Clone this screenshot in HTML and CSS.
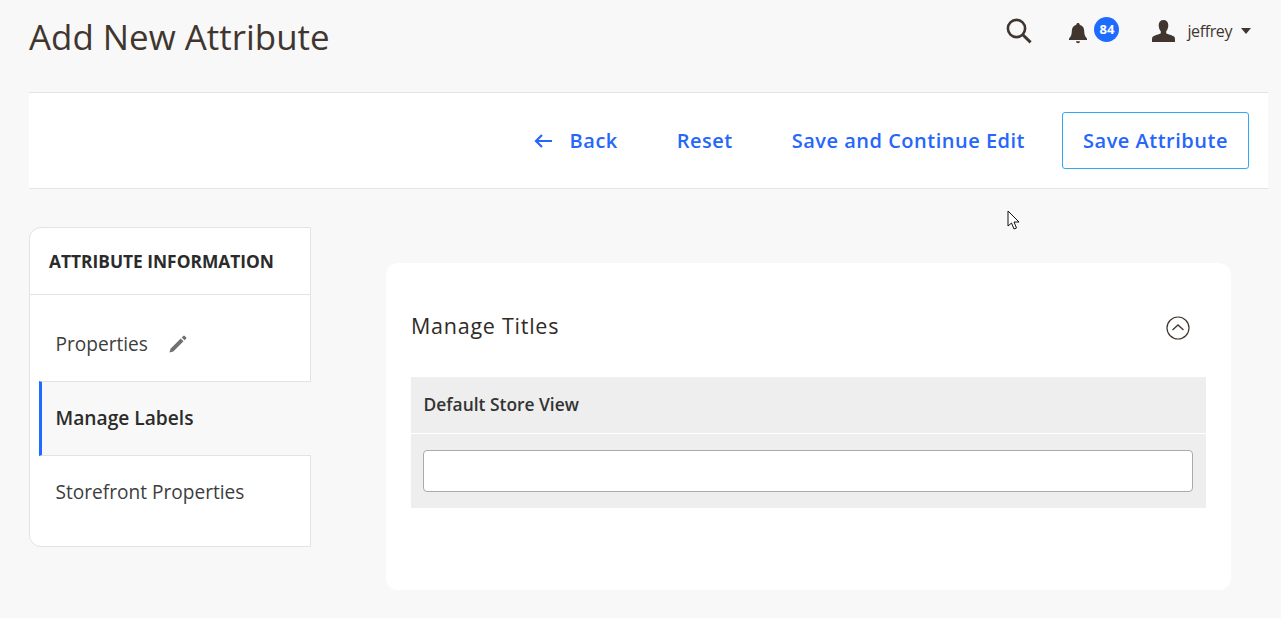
FILE: index.html
```html
<!DOCTYPE html>
<html lang="en">
<head>
<meta charset="utf-8">
<title>Add New Attribute</title>
<link rel="stylesheet" href="styles.css">
</head>
<body>
<div class="page">
  <header class="top">
    <h1 class="title">Add New Attribute</h1>
    <div class="tools">
      <svg class="ic-search" width="28" height="28" viewBox="0 0 28 28"><circle cx="11.5" cy="11.5" r="8.6" fill="none" stroke="#41362f" stroke-width="2.6"/><path d="M17.8 17.8 L25.6 25.4" stroke="#41362f" stroke-width="3" fill="none"/></svg>
      <div class="bell">
        <svg width="20" height="22" viewBox="0 0 20 22"><path d="M10 1c1 0 1.600.7 1.700 1.700 3 .8 4.500 3.300 4.500 6.300 0 3.500.8 5.500 2.800 7.500v1.500H1v-1.500c2-2 2.800-4 2.800-7.500 0-3 1.500-5.500 4.500-6.300C8.400 1.700 9 1 10 1z" fill="#41362f"/><path d="M8 19.200h4c0 1.200-.9 2-2 2s-2-.8-2-2z" fill="#41362f"/></svg>
        <span class="badge">84</span>
      </div>
      <div class="user">
        <svg width="25" height="22" viewBox="0 0 25 22"><path d="M12.500 0c3 0 4.800 2 4.800 5.200 0 2.500-.9 4.800-2.100 6.100v1.900c1.500 1.300 6.300 1.800 8.100 3.600.8.800.7 2.700.7 5.200H1c0-2.500-.1-4.400.7-5.200 1.800-1.800 6.600-2.300 8.100-3.600v-1.900C8.600 10 7.700 7.700 7.700 5.200 7.700 2 9.500 0 12.500 0z" fill="#41362f"/></svg>
        <span class="uname">jeffrey</span>
        <span class="caret"></span>
      </div>
    </div>
  </header>

  <div class="actions">
    <a class="act back">
      <svg width="19" height="14" viewBox="0 0 19 14"><path d="M8 1 L2 7 L8 13 M2 7 H18" fill="none" stroke="#2666fb" stroke-width="2.200"/></svg>
      <span>Back</span>
    </a>
    <a class="act">Reset</a>
    <a class="act">Save and Continue Edit</a>
    <a class="act primary">Save Attribute</a>
  </div>

  <main class="content">
    <aside class="side">
      <div class="side-head">ATTRIBUTE INFORMATION</div>
      <div class="side-item first">
        <span>Properties</span>
        <svg class="pencil" width="18" height="18" viewBox="0 0 18 18"><path d="M0.500 17.500 L1.500 13.700 L11.700 3.500 L14.500 6.300 L4.300 16.500 Z M12.700 2.500 L14.300 .9 a1 1 0 0 1 1.400 0 L17.100 2.300 a1 1 0 0 1 0 1.400 L15.500 5.300 Z" fill="#707070"/></svg>
      </div>
      <div class="side-item active">Manage Labels</div>
      <div class="side-item last">Storefront Properties</div>
    </aside>

    <section class="card">
      <div class="card-head">
        <h2 class="card-title">Manage Titles</h2>
        <svg class="toggle" width="24" height="24" viewBox="0 0 24 24"><circle cx="12" cy="12" r="11" fill="none" stroke="#41362f" stroke-width="1.200"/><path d="M6.500 14 L12 9 L17.500 14" fill="none" stroke="#41362f" stroke-width="1.300"/></svg>
      </div>
      <div class="tbl-head">Default Store View</div>
      <div class="tbl-row"><input class="field" type="text"></div>
    </section>
  </main>
</div>
<svg class="cursor" width="14" height="21" viewBox="0 0 14 21"><path d="M1 1 V16 L4.500 13 L7 19 L9.500 18 L7 12 H12 Z" fill="#fff" stroke="#111" stroke-width="1"/></svg>
</body>
</html>
```
FILE: styles.css
```css
* { box-sizing: border-box; }
html, body { margin: 0; padding: 0; height: 100%; overflow: hidden; }
body { background: #f8f8f8; font-family: "Open Sans", "Noto Sans", sans-serif; color: #333; position: relative; }
.page { padding: 0 13px 0 29px; }
.top { height: 92px; display: flex; justify-content: space-between; align-items: flex-start; }
.title { margin: 14px 0 0; font-size: 34.900px; line-height: 46px; font-weight: 400; color: #41362f; }
.tools { display: flex; align-items: center; margin-top: 17px; margin-right: 17px; }
.ic-search { display: block; margin-right: 35px; }
.bell { display: flex; align-items: flex-start; margin-right: 32px; }
.bell svg { display: block; margin-top: 4px; }
.badge { width: 25px; height: 25px; border-radius: 50%; background: #1e6bff; color: #fff; font-size: 13px; font-weight: 700; line-height: 25px; text-align: center; margin-left: 6px; margin-top: -1px; }
.user { display: flex; align-items: center; }
.uname { font-size: 16px; letter-spacing: -.4px; color: #41362f; margin-left: 11px; margin-top: -1px; }
.caret { width: 0; height: 0; border: 5.500px solid transparent; border-top: 6px solid #41362f; border-bottom: 0; margin-left: 9px; }

.actions { height: 97px; background: #fff; border-top: 1px solid #e3e3e3; border-bottom: 1px solid #e3e3e3; display: flex; justify-content: flex-end; align-items: center; padding-right: 19px; }
.act { font-size: 20px; font-weight: 600; letter-spacing: .5px; color: #2666fb; margin-left: 59px; display: flex; align-items: center; }
.back svg { display: block; margin-right: 17px; }
.primary { height: 57px; width: 187px; margin-left: 37px; justify-content: center; background: #fff; border: 1px solid #2fa8f5; border-radius: 3px; }

.content { display: flex; align-items: flex-start; padding-top: 38px; }
.side { width: 282px; height: 320px; background: #fff; border: 1px solid #e3e3e3; border-radius: 12px 0 0 12px; flex: none; }
.side-head { height: 67px; padding: 0 0 0 19px; font-size: 17.350px; font-weight: 700; line-height: 67px; color: #2b2b2b; border-bottom: 1px solid #e3e3e3; }
.side-item { font-size: 19.100px; padding-left: 25.500px; color: #3d3d3d; display: flex; align-items: center; }
.side-item.first { height: 86px; padding-top: 11px; }
.pencil { margin-left: 21px; }
.side-item.active { height: 75px; margin-left: 9px; margin-right: -1px; padding-left: 13.500px; padding-bottom: 2px; font-size: 19.200px; font-weight: 600; color: #2b2b2b; background: #f8f8f8; border-left: 3px solid #1e6bff; border-top: 1px solid #e3e3e3; border-bottom: 1px solid #e3e3e3; }
.side-item.last { height: 90px; padding-bottom: 41px; align-items: flex-end; }

.card { margin: 36px 0 0 75px; width: 845px; height: 327px; background: #fff; border-radius: 12px; padding: 0 25px; }
.card-head { height: 114px; display: flex; justify-content: space-between; align-items: flex-start; }
.card-title { margin: 46px 0 0; font-size: 21.500px; line-height: 34px; font-weight: 500; color: #2f2b28; letter-spacing: .75px; }
.toggle { margin: 53px 16px 0 0; }
.tbl-head { height: 57px; background: #eee; border-bottom: 1px solid #fff; padding-left: 12.500px; font-size: 17.400px; font-weight: 600; line-height: 55px; color: #333; }
.tbl-row { height: 74px; background: #eee; padding: 16px 13px 16px 12px; }
.field { display: block; width: 100%; height: 42px; background: #fff; border: 1px solid #aaa; border-radius: 4px; }

.cursor { position: absolute; left: 1007px; top: 210px; }
```
